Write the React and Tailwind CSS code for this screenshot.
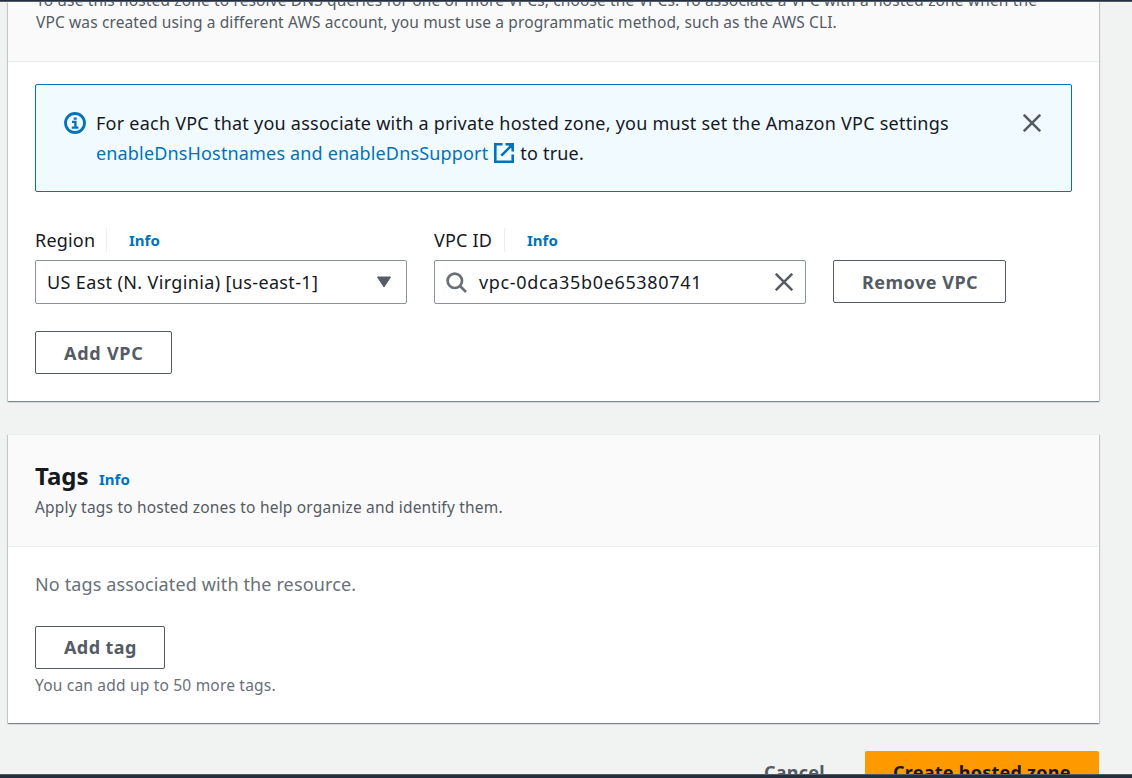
const cx = (...parts) => parts.filter(Boolean).join(" ");

function Info({ className }) {
  return (
    <a href="#" className={cx("text-[15px] leading-5 font-bold text-[#0073bb]", className)}>
      Info
    </a>
  );
}

function Close({ className }) {
  return (
    <svg viewBox="0 0 18 18" className={cx("size-[18px] shrink-0", className)} fill="none" stroke="#545b64" strokeWidth="2.5">
      <path d="M.8.8 17.2 17.2M17.2.8.8 17.2" />
    </svg>
  );
}

function Button({ children, className }) {
  return (
    <button
      className={cx(
        "flex h-[43px] shrink-0 items-center rounded-[2px] border border-[#545b64] bg-white pl-[28px] text-[18px] font-bold whitespace-nowrap text-[#545b64]",
        className
      )}
    >
      {children}
    </button>
  );
}

function Panel({ children, className }) {
  return (
    <section
      className={cx(
        "flex shrink-0 flex-col bg-white shadow-[0_1px_1px_0_rgba(0,28,36,0.3),1px_1px_1px_0_rgba(0,28,36,0.15),-1px_1px_1px_0_rgba(0,28,36,0.15)]",
        className
      )}
    >
      {children}
    </section>
  );
}

function Label({ children, className }) {
  return (
    <div className="flex h-6 items-center">
      <span className={cx("h-6 shrink-0 border-r border-[#eaeded] text-[18px] leading-6 tracking-[0.2px] whitespace-nowrap", className)}>{children}</span>
      <Info className="ml-[22px]" />
    </div>
  );
}

export default function App() {
  return (
    <div className="flex h-[778px] w-[1132px] flex-col overflow-hidden bg-[#f1f3f3] font-['Noto_Sans',sans-serif] text-[#16191f]">
      <div className="z-10 h-[2px] shrink-0 border-b border-[#545b64] bg-[#232f3e]" />
      <main className="flex h-[772px] shrink-0 flex-col overflow-hidden pl-2">
        <Panel className="h-[399px] w-[1091px]">
          <header className="flex h-[60px] shrink-0 flex-col overflow-hidden border-b border-[#eaeded] bg-[#fafafa] pl-[28px] text-[15.5px] leading-[22px] tracking-[0.13px] whitespace-nowrap text-[#545b64]">
            <p className="-mt-[12px] leading-[21px] tracking-[0.14px]">
              To use this hosted zone to resolve DNS queries for one or more VPCs, choose the VPCs. To associate a VPC with a hosted zone when the
            </p>
            <p>VPC was created using a different AWS account, you must use a programmatic method, such as the AWS CLI.</p>
          </header>
          <div className="flex flex-col pt-[22px] pl-[27px]">
            <div className="flex h-[108px] w-[1037px] items-start rounded-[2px] border border-[#0073bb] bg-[#f1faff] pt-[23px] pl-[28px]">
              <svg viewBox="0 0 22 22" className="mt-1 size-[22px] shrink-0" fill="none" stroke="#0073bb">
                <circle cx="11" cy="11" r="9.5" strokeWidth="2.8" />
                <path d="M8 9.9h3.4v5.6M7.8 15.6h6.6M9.7 6.6h3" strokeWidth="2.4" />
              </svg>
              <div className="ml-[10px] w-[927px] text-[18px] leading-[30px] whitespace-nowrap">
                <p className="tracking-[0.24px]">For each VPC that you associate with a private hosted zone, you must set the Amazon VPC settings</p>
                <p className="flex items-center">
                  <a href="#" className="tracking-[0.16px] text-[#0073bb]">enableDnsHostnames and enableDnsSupport</a>
                  <svg viewBox="0 0 20 20" className="ml-[6px] size-5 shrink-0" fill="none" stroke="#0073bb" strokeWidth="2.6">
                    <path d="M8.5 1.3H1.3v17.4h17.4v-7.2M11.5 1.3h7.2v7.2M18.2 1.8 7.3 12.7" />
                    <path d="M13.5 1.3h5.2v5.2z" fill="#0073bb" stroke="none" />
                  </svg>
                  <span className="ml-[6px] tracking-[0.2px]">to true.</span>
                </p>
              </div>
              <Close className="mt-[6px]" />
            </div>
            <div className="mt-[36px] flex items-start">
              <div className="w-[372px]">
                <Label className="w-[72px]">Region</Label>
                <div className="mt-2 flex h-[44px] items-center justify-between rounded-[2px] border border-[#879596] pr-[14px] pl-[11px] text-[18px]">
                  <span className="tracking-[0.36px] whitespace-nowrap">US East (N. Virginia) [us-east-1]</span>
                  <svg viewBox="0 0 16 12" className="h-3 w-4" fill="#545b64" stroke="#545b64" strokeLinejoin="round">
                    <path d="M1.5 1h13L8 11z" />
                  </svg>
                </div>
              </div>
              <div className="ml-[27px] w-[372px]">
                <Label className="w-[71px]">VPC ID</Label>
                <div className="mt-2 flex h-[44px] items-center rounded-[2px] border border-[#879596] pr-[12px] pl-[11px] text-[18px]">
                  <svg viewBox="0 0 21 21" className="size-[21px]" fill="none" stroke="#687078" strokeWidth="2.7">
                    <circle cx="8.8" cy="8.8" r="7.2" />
                    <path d="m14 14 6 6" />
                  </svg>
                  <span className="ml-[12px] flex-1 tracking-[0.66px] whitespace-nowrap">vpc-0dca35b0e65380741</span>
                  <Close />
                </div>
              </div>
              <Button className="mt-8 ml-[27px] w-[173px] pt-[2px] tracking-[0.5px]">Remove VPC</Button>
            </div>
            <Button className="mt-[27px] w-[137px] pt-[2px] tracking-[0.75px]">Add VPC</Button>
          </div>
        </Panel>
        <Panel className="mt-[33px] h-[289px] w-[1091px] border-t border-[#eaeded]">
          <header className="flex h-[112px] shrink-0 flex-col border-b border-[#eaeded] bg-[#fafafa] pt-[25px] pl-[27px]">
            <div className="flex items-baseline">
              <h2 className="w-[64px] text-[24px] leading-8 font-bold">Tags</h2>
              <Info />
            </div>
            <p className="mt-[4px] text-[15.5px] leading-[22px] tracking-[0.2px] whitespace-nowrap text-[#545b64]">Apply tags to hosted zones to help organize and identify them.</p>
          </header>
          <div className="flex flex-col pt-[22px] pl-[27px]">
            <p className="text-[18px] leading-[30px] tracking-[0.13px] whitespace-nowrap text-[#687078]">No tags associated with the resource.</p>
            <Button className="mt-[27px] w-[130px] tracking-[0.4px]">Add tag</Button>
            <p className="mt-[5px] text-[15.5px] leading-[22px] tracking-[0.2px] whitespace-nowrap text-[#687078]">You can add up to 50 more tags.</p>
          </div>
        </Panel>
        <div className="mt-[28px] flex w-[1091px] shrink-0 justify-end text-[18px] font-bold tracking-[0.25px] whitespace-nowrap">
          <button className="h-[43px] w-[101px] text-left text-[#545b64]">Cancel</button>
          <button className="h-[43px] w-[234px] rounded-[2px] bg-[#ff9900] pl-[28px] text-left">Create hosted zone</button>
        </div>
      </main>
      <div className="h-[4px] shrink-0 border-t border-[#545b64] bg-[#232f3e]" />
    </div>
  );
}
